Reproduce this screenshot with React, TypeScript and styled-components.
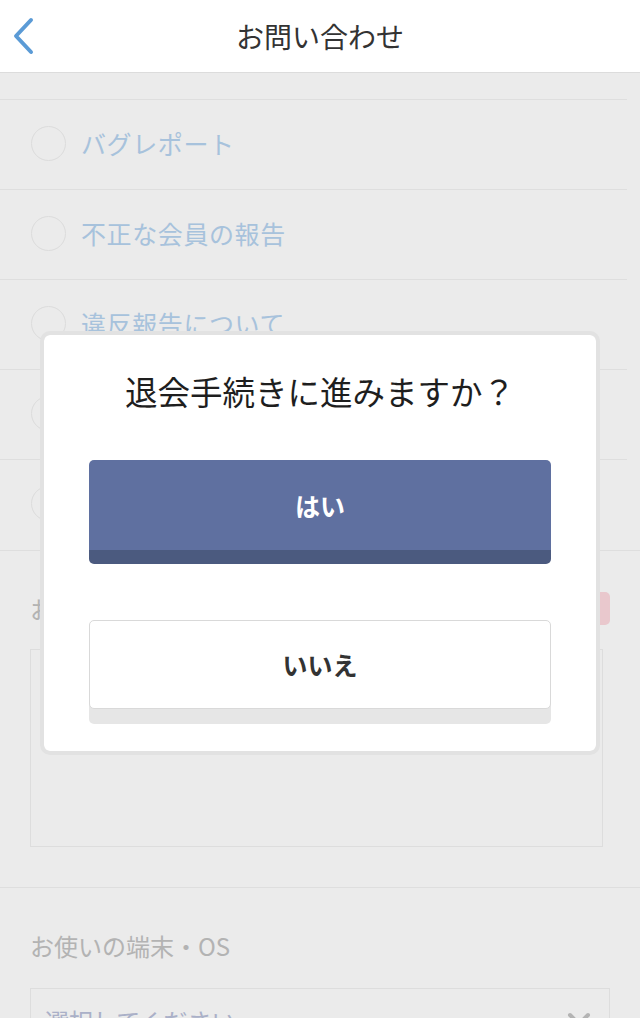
import styled, { createGlobalStyle } from 'styled-components';

// 下の画面はモーダルの背景で少し暗くなっている
const GlobalStyle = createGlobalStyle`
  body {
    margin: 0;
    background: #fff;
    font-family: "Noto Sans CJK JP", "Noto Sans", sans-serif;
  }
  * {
    box-sizing: border-box;
  }
`;

const categories = [
  'ログインについて',
  'バグレポート',
  '不正な会員の報告',
  '違反報告について',
  '課金・決済について',
  'その他',
];

const App = () => {
  return (
    <Page>
      <GlobalStyle />
      <Header>
        <BackButton aria-label="戻る">
          <svg width="26" height="38" viewBox="0 0 26 38">
            <path
              d="M20 3 L5 19 L20 35"
              fill="none"
              stroke="#5b9bd6"
              strokeWidth="4"
              strokeLinecap="round"
              strokeLinejoin="round"
            />
          </svg>
        </BackButton>
        <Title>お問い合わせ</Title>
        <span />
      </Header>

      <Content>
        <RadioList>
          {categories.map((label) => (
            <RadioRow key={label}>
              <RadioCircle />
              <RadioLabel>{label}</RadioLabel>
            </RadioRow>
          ))}
        </RadioList>

        <FormSection>
          <LabelRow>
            <FieldLabel>お問い合わせ内容</FieldLabel>
            <Required>必須</Required>
          </LabelRow>
          <TextArea />
        </FormSection>

        <FormSection $tight>
          <LabelRow>
            <FieldLabel>お使いの端末・OS</FieldLabel>
          </LabelRow>
          <SelectBox>
            <Placeholder>選択してください</Placeholder>
            <svg width="24" height="16" viewBox="0 0 24 16">
              <path
                d="M3 3 L12 12 L21 3"
                fill="none"
                stroke="#c4c4c4"
                strokeWidth="4"
                strokeLinecap="round"
                strokeLinejoin="round"
              />
            </svg>
          </SelectBox>
        </FormSection>
      </Content>

      <Backdrop>
        <Modal>
          <ModalTitle>退会手続きに進みますか？</ModalTitle>
          <YesButton>はい</YesButton>
          <NoButton>いいえ</NoButton>
        </Modal>
      </Backdrop>
    </Page>
  );
};

const Page = styled.div`
  position: relative;
  height: 1018px;
  overflow: hidden;
  background: #fff;
`;

const Header = styled.header`
  position: relative;
  z-index: 2;
  display: grid;
  grid-template-columns: 64px 1fr 64px;
  align-items: center;
  height: 73px;
  background: #fff;
  border-bottom: 1px solid #dcdcdc;
`;

const BackButton = styled.button`
  display: flex;
  align-items: center;
  padding: 0 0 0 11px;
  border: 0;
  background: none;
`;

const Title = styled.h1`
  margin: 0;
  text-align: center;
  font-size: 28px;
  font-weight: 400;
  color: #333;
`;

const Content = styled.main`
  overflow: hidden;
`;

// スクロール済みの位置を再現
const RadioList = styled.ul`
  margin: -63px 13px 0 0;
  padding: 0;
  list-style: none;
`;

const RadioRow = styled.li`
  display: flex;
  align-items: center;
  gap: 15px;
  height: 90px;
  padding: 0 0 3px 31px;
  border-bottom: 1px solid #f1f1f1;
  &:last-child {
    border-bottom: 0;
  }
`;

const RadioCircle = styled.span`
  width: 35px;
  height: 35px;
  border: 1.5px solid #efefef;
  border-radius: 50%;
`;

const RadioLabel = styled.span`
  font-size: 25px;
  color: #b6d3ef;
  letter-spacing: 0.6px;
`;

const FormSection = styled.section<{ $tight?: boolean }>`
  padding: ${({ $tight }) => ($tight ? '40px 30px 0' : '40px 30px 40px')};
  border-top: 1px solid #f1f1f1;
`;

const LabelRow = styled.div`
  display: flex;
  align-items: center;
  justify-content: space-between;
  min-height: 33px;
`;

const FieldLabel = styled.span`
  font-size: 24px;
  color: #c3c3c3;
`;

const Required = styled.span`
  display: flex;
  align-items: center;
  justify-content: center;
  width: 52px;
  height: 33px;
  border-radius: 5px;
  background: #fdd9df;
  color: #fff;
  font-size: 16px;
`;

const TextArea = styled.div`
  height: 198px;
  margin: 23px 7px 0 0;
  border: 1px solid #f0f0f0;
`;

const SelectBox = styled.div`
  display: flex;
  align-items: center;
  justify-content: space-between;
  height: 56px;
  margin-top: 25px;
  padding: 8px 18px 0 14px;
  border: 1px solid #f0f0f0;
`;

const Placeholder = styled.span`
  font-size: 24px;
  color: #b9bfd9;
`;

const Backdrop = styled.div`
  position: absolute;
  top: 73px;
  left: 0;
  right: 0;
  bottom: 0;
  z-index: 1;
  display: flex;
  align-items: center;
  justify-content: center;
  padding-bottom: 6px;
  background: rgba(0, 0, 0, 0.08);
`;

const Modal = styled.div`
  width: 560px;
  padding: 33px 45px 27px;
  border: 4px solid #e2e2e2;
  border-radius: 10px;
  background: #fff;
  background-clip: padding-box;
`;

const ModalTitle = styled.p`
  margin: 0 0 47px;
  text-align: center;
  font-size: 32.5px;
  line-height: 45px;
  color: #1e1e1e;
`;

const YesButton = styled.button`
  display: flex;
  align-items: center;
  justify-content: center;
  width: 100%;
  height: 104px;
  padding: 0;
  border: 0;
  border-bottom: 14px solid #4b5a7f;
  border-radius: 5px;
  background: #5f70a0;
  color: #fff;
  font-family: inherit;
  font-size: 25px;
  font-weight: 700;
`;

const NoButton = styled.button`
  display: flex;
  align-items: center;
  justify-content: center;
  width: 100%;
  height: 89px;
  margin: 56px 0 15px;
  padding: 0;
  border: 1px solid #d9d9d9;
  border-radius: 5px;
  background: #fff;
  box-shadow: 0 15px 0 #e6e6e6;
  color: #333;
  font-family: inherit;
  font-size: 25px;
  font-weight: 700;
`;

export default App;
